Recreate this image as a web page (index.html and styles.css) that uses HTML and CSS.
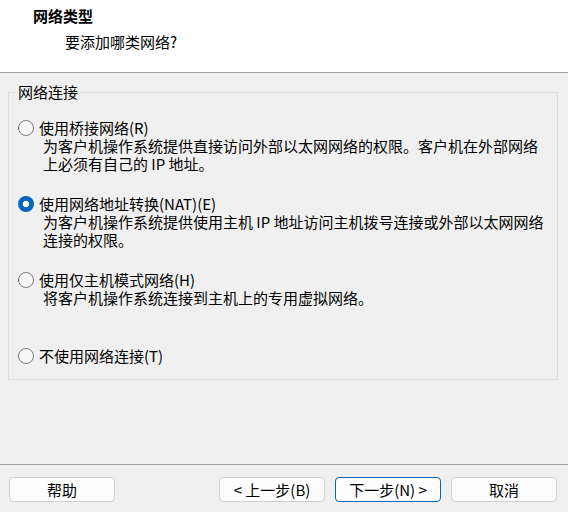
FILE: index.html
```html
<!DOCTYPE html>
<html lang="zh-CN">
<head>
<meta charset="utf-8">
<title>网络类型</title>
<link rel="stylesheet" href="styles.css">
</head>
<body>
<div class="wizard">
  <header class="header">
    <div class="title">网络类型</div>
    <div class="subtitle">要添加哪类网络?</div>
  </header>
  <main class="main">
    <fieldset class="group">
      <legend class="legend">网络连接</legend>
      <div class="option">
        <label class="opt-row"><input type="radio" name="net" class="radio"><span>使用桥接网络(R)</span></label>
        <div class="desc"><div class="line">为客户机操作系统提供直接访问外部以太网网络的权限。客户机在外部网络</div><div class="line">上必须有自己的 IP 地址。</div></div>
      </div>
      <div class="option">
        <label class="opt-row"><input type="radio" name="net" class="radio" checked><span>使用网络地址转换(NAT)(E)</span></label>
        <div class="desc"><div class="line">为客户机操作系统提供使用主机 IP 地址访问主机拨号连接或外部以太网网络</div><div class="line">连接的权限。</div></div>
      </div>
      <div class="option">
        <label class="opt-row"><input type="radio" name="net" class="radio"><span>使用仅主机模式网络(H)</span></label>
        <div class="desc"><div class="line">将客户机操作系统连接到主机上的专用虚拟网络。</div></div>
      </div>
      <div class="option option-last">
        <label class="opt-row"><input type="radio" name="net" class="radio"><span>不使用网络连接(T)</span></label>
      </div>
    </fieldset>
  </main>
  <footer class="footer">
    <button class="btn">帮助</button>
    <div class="spacer"></div>
    <button class="btn">&lt; 上一步(B)</button>
    <button class="btn btn-default">下一步(N) &gt;</button>
    <button class="btn">取消</button>
  </footer>
</div>
</body>
</html>
```
FILE: styles.css
```css
* { box-sizing: border-box; }
html, body { margin: 0; padding: 0; }
body {
  background: #f0f0f0;
  font-family: "Noto Sans CJK SC", "Microsoft YaHei", sans-serif;
  font-size: 15px;
  color: #000;
}
.wizard {
  width: 568px;
  height: 512px;
  display: flex;
  flex-direction: column;
}
.header {
  height: 73px;
  background: #fff;
  border-bottom: 1px solid #a0a0a0;
  padding-top: 6px;
}
.title {
  font-weight: bold;
  line-height: 20px;
  padding-left: 33px;
}
.subtitle {
  line-height: 20px;
  padding-left: 65px;
  margin-top: 6px;
}
.main {
  flex: 1;
  padding: 10px 10px 0 8px;
}
.group {
  margin: 0;
  border: 1px solid #dcdcdc;
  padding: 17px 0 14px 9px;
  min-width: 0;
}
.legend {
  padding: 0 2px;
  margin-left: -2px;
  line-height: 18px;
  color: #000;
}
.option {
  height: 76px;
}
.option-last {
  height: 19px;
}
.opt-row {
  display: flex;
  align-items: center;
  height: 19px;
  line-height: 19px;
  gap: 5px;
}
.radio {
  appearance: none;
  -webkit-appearance: none;
  margin: 0;
  width: 16px;
  height: 16px;
  min-width: 16px;
  border-radius: 50%;
  border: 1px solid #7a7a7a;
  background: #f6f6f6;
  flex: none;
}
.radio:checked {
  border: none;
  background: radial-gradient(circle, #fff 0 3px, #0067c0 3.6px);
}
.desc {
  padding-left: 25px;
  white-space: nowrap;
}
.line {
  height: 18px;
  line-height: 18px;
}
.footer {
  height: 48px;
  border-top: 1px solid #a0a0a0;
  display: flex;
  align-items: flex-start;
  padding: 12px 11px 0 9px;
  gap: 10px;
}
.spacer { flex: 1; }
.btn {
  width: 106px;
  height: 25px;
  margin: 0;
  padding: 0;
  font-family: inherit;
  font-size: 15px;
  line-height: 23px;
  color: #000;
  background: #fdfdfd;
  border: 1px solid #d0d0d0;
  border-radius: 4px;
}
.btn-default {
  border-color: #0067c0;
}
```
